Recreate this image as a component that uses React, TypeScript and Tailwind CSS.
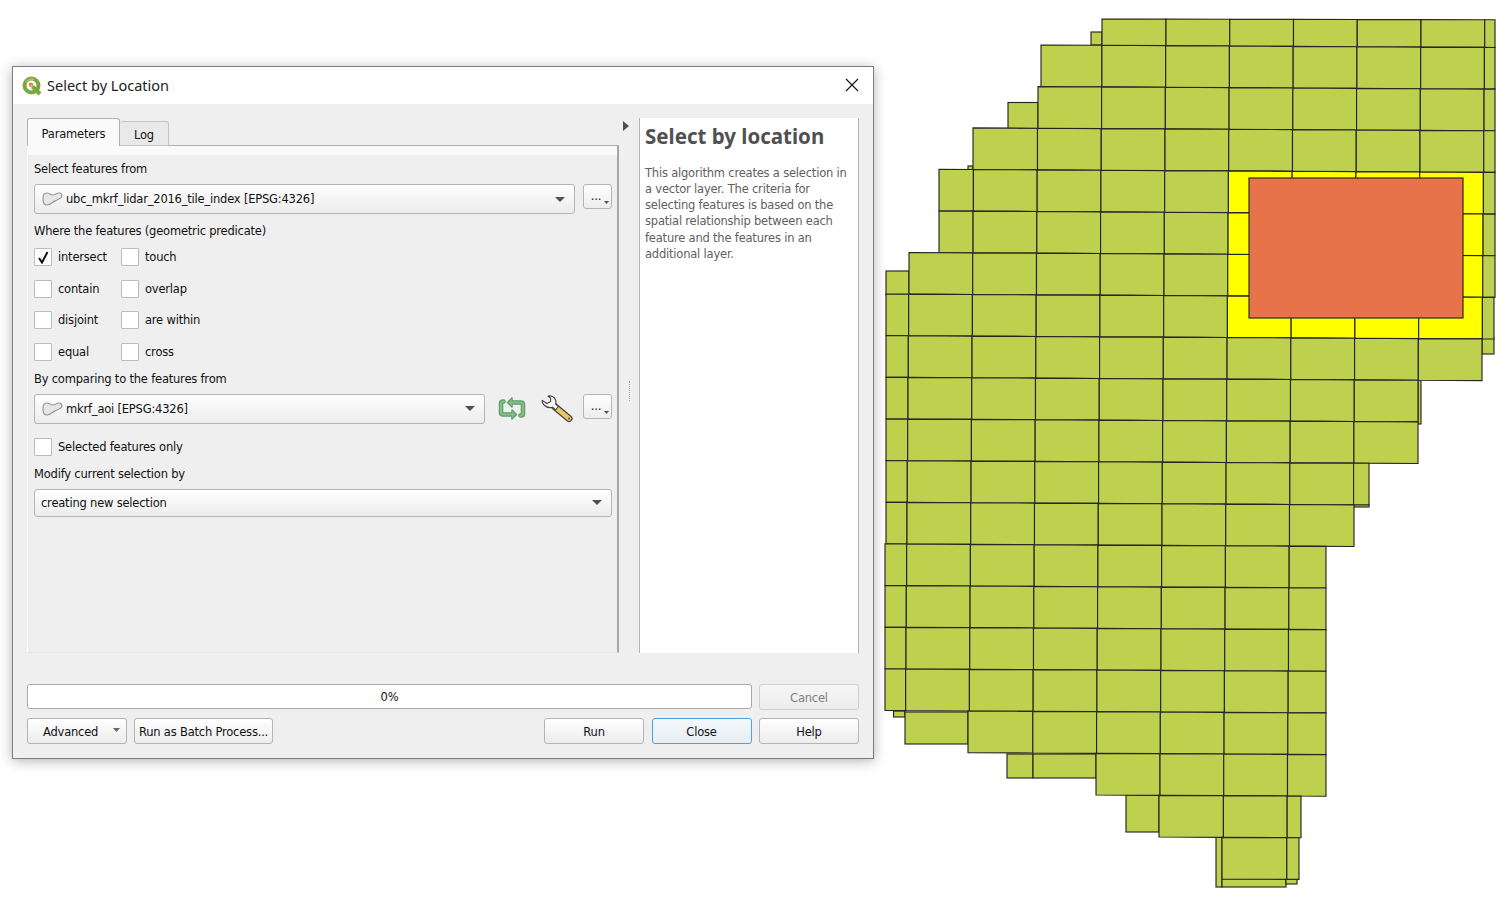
import React from "react";

const GREEN = "#bed14f";
const YELLOW = "#ffff00";
const LINE = "#262626";

// tile grid is a little skewed, so lines are computed
const colX = (k: number, y: number) => 1102.2 + 63.75 * k - 0.008 * (y - 30);
const rowY = (j: number, x: number) => 45.3 + 41.65 * j + 0.0055 * (x - 1102);

const tileRows = [
  { r: -1, l: 1102, e: 1495 },
  { r: 0, l: 1041, e: 1495 },
  { r: 1, l: 1038, e: 1495 },
  { r: 2, l: 973, e: 1495 },
  { r: 3, l: 939, e: 1495 },
  { r: 4, l: 939, e: 1495 },
  { r: 5, l: 909, e: 1495 },
  { r: 6, l: 886, e: 1494 },
  { r: 7, l: 886, e: 1482 },
  { r: 8, l: 886, e: 1418 },
  { r: 9, l: 886, e: 1418 },
  { r: 10, l: 886, e: 1369 },
  { r: 11, l: 886, e: 1354 },
  { r: 12, l: 885, e: 1326 },
  { r: 13, l: 885, e: 1326 },
  { r: 14, l: 885, e: 1326 },
  { r: 15, l: 885, e: 1326 },
  { r: 16, l: 968, e: 1326 },
  { r: 17, l: 1096, e: 1326 },
  { r: 18, l: 1159, e: 1301 },
  { r: 19, l: 1222, e: 1299 },
];

const extraTiles = [
  [1091, 32, 1102, 45],
  [1008, 102.5, 1038, 129],
  [968, 166, 973, 170],
  [886, 271, 909, 295],
  [1482, 338, 1494, 354],
  [1418, 380, 1421, 424],
  [1354, 504, 1369, 507],
  [893.5, 711, 905, 717],
  [905, 712, 968, 744],
  [1007, 754, 1033, 778],
  [1033, 754, 1096, 778],
  [1126, 795, 1159, 832],
  [1216, 837, 1222, 887],
  [1222, 879, 1286, 887],
  [1286, 879, 1297, 884],
];

function TileMap() {
  const cells: React.ReactNode[] = [];
  tileRows.forEach((row) => {
    const ym = rowY(row.r, 1200) + 20;
    const ks: number[] = [];
    for (let k = -4; k < 8; k++) {
      const x = colX(k, ym);
      if (x > row.l + 2 && x < row.e - 2) ks.push(k);
    }
    const edges = [null, ...ks, null];
    for (let i = 0; i < edges.length - 1; i++) {
      const a = edges[i];
      const b = edges[i + 1];
      const xa = a === null ? row.l : colX(a, ym);
      const xb = b === null ? row.e : colX(b, ym);
      const top = (x: number) => (row.r === -1 ? 19 + 0.002 * (x - 1102) : rowY(row.r, x));
      const bot = (x: number) => rowY(row.r + 1, x);
      const selected = row.r >= 3 && row.r <= 6 && a !== null && a >= 2 && b !== null && b <= 6;
      cells.push(
        <polygon
          key={`${row.r}-${i}`}
          points={`${xa},${top(xa)} ${xb},${top(xb)} ${xb},${bot(xb)} ${xa},${bot(xa)}`}
          fill={selected ? YELLOW : GREEN}
          stroke={LINE}
          strokeWidth="1.15"
        />
      );
    }
  });
  return (
    <svg width="629" height="898" viewBox="880 0 629 898" className="shrink-0 ml-[6px]">
      {extraTiles.map(([a, b, c, d], i) => (
        <rect key={i} x={a} y={b} width={c - a} height={d - b} fill={GREEN} stroke={LINE} strokeWidth="1.15" />
      ))}
      {cells}
      <rect x="1249" y="178" width="214" height="140" fill="#e8734a" stroke={LINE} strokeWidth="1.15" />
    </svg>
  );
}

function QgisLogo() {
  return (
    <svg width="20" height="20" viewBox="0 0 20 20" className="shrink-0">
      <circle cx="9.5" cy="9.5" r="7" fill="none" stroke="#79a83f" strokeWidth="4" />
      <path d="M10.5 10.5 L18 18" stroke="#79a83f" strokeWidth="4" />
      <path d="M4 7 A6 6 0 0 1 12 3.6" fill="none" stroke="#a9c95c" strokeWidth="1.5" />
      <circle cx="9" cy="8.8" r="2.2" fill="#ea7d45" />
      <circle cx="9.6" cy="9.6" r="0.9" fill="#f2d060" />
    </svg>
  );
}

function LayerIcon() {
  return (
    <svg width="21" height="14" viewBox="0 0 21 14" className="shrink-0">
      <path
        d="M4.5 1 C7 1 8.5 3 10.8 3 C13 3 14.6 1 17.2 1 C19.4 1 20.2 2.6 19.8 4.4 C19.4 6.4 16.6 7.4 13.5 8.6 C10.6 9.8 8.6 13 5 13 C1.8 13 1 10.6 1 7 C1 3.4 1.6 1 4.5 1 Z"
        fill="#e6e6e6"
        stroke="#979797"
        strokeWidth="1.2"
      />
    </svg>
  );
}

function Caret({ small }: { small?: boolean }) {
  return small ? (
    <svg width="5" height="3" viewBox="0 0 5 3" className="absolute right-[2px] bottom-[4px]">
      <path d="M0 0 H5 L2.5 3 Z" fill="#555" />
    </svg>
  ) : (
    <svg width="10" height="5" viewBox="0 0 10 5" className="shrink-0">
      <path d="M0 0 H10 L5 5 Z" fill="#505050" />
    </svg>
  );
}

function Combo({ width, height, text, layer }: { width: string; height: string; text: string; layer?: boolean }) {
  return (
    <div className={`${width} ${height} flex items-center pl-[6px] pr-[9px] rounded-[3px] border border-[#b4b4b4] bg-gradient-to-b from-white to-[#ececec] shrink-0`}>
      {layer && (
        <div className="ml-[1px] mr-[3px] flex">
          <LayerIcon />
        </div>
      )}
      <span className="flex-1 text-[#111] pt-[2px]">{text}</span>
      <Caret />
    </div>
  );
}

function MoreButton() {
  return (
    <div className="relative w-[29px] h-[25px] rounded-[3px] border border-[#b4b4b4] bg-gradient-to-b from-white to-[#ececec] flex items-center justify-center shrink-0">
      <span className="leading-none text-[#111] mt-[1px] -ml-[3px]">...</span>
      <Caret small />
    </div>
  );
}

function Check({ label, checked, width }: { label: string; checked?: boolean; width?: string }) {
  return (
    <div className={`flex items-center gap-[6px] ${width ?? ""}`}>
      <div className="w-[18px] h-[18px] bg-white border border-[#bcbcbc] rounded-[1px] flex items-center justify-center shrink-0">
        {checked && (
          <svg width="12" height="13" viewBox="0 0 12 13">
            <path d="M2 7 L5 11.5 L10.5 1" fill="none" stroke="#111" strokeWidth="2" />
          </svg>
        )}
      </div>
      <span className="text-[#111] pt-[2px]">{label}</span>
    </div>
  );
}

function Label({ children, height }: { children: React.ReactNode; height: string }) {
  return <div className={`${height} flex items-center text-[#111] pt-[2px]`}>{children}</div>;
}

function Btn({ children, width, active, disabled }: { children: React.ReactNode; width: string; active?: boolean; disabled?: boolean }) {
  const tone = active
    ? "border-[#4aa3e8] from-[#f4f8fb] to-[#e6eef4] text-[#111]"
    : disabled
      ? "border-[#cfcfcf] from-[#f6f6f6] to-[#ececec] text-[#808080]"
      : "border-[#b4b4b4] from-white to-[#ececec] text-[#111]";
  return (
    <div className={`${width} h-[26px] rounded-[3px] border bg-gradient-to-b ${tone} flex items-center justify-center shrink-0 pt-[3px]`}>
      {children}
    </div>
  );
}

function SyncIcon() {
  const left = "M5.5 4.5 H5 Q3 4.5 3 6.5 V15.5 Q3 17.5 5 17.5 H14";
  const right = "M22.5 18.5 H23 Q25 18.5 25 16.5 V7.5 Q25 5.5 23 5.5 H14";
  return (
    <svg width="28" height="24" viewBox="0 0 28 24" className="shrink-0">
      <g fill="none" strokeLinejoin="round" strokeLinecap="round">
        <path d={left} stroke="#5e9e68" strokeWidth="4.6" />
        <path d={right} stroke="#5e9e68" strokeWidth="4.6" />
        <path d="M14 13 L18.5 17.5 L14 22 Z" fill="#5e9e68" stroke="#5e9e68" strokeWidth="1.5" />
        <path d="M14 1 L9.5 5.5 L14 10 Z" fill="#5e9e68" stroke="#5e9e68" strokeWidth="1.5" />
        <path d={left} stroke="#86bd88" strokeWidth="2.2" />
        <path d={right} stroke="#86bd88" strokeWidth="2.2" />
        <path d="M14.5 14.5 L17 17.5 L14.5 20.5 Z" fill="#86bd88" stroke="#86bd88" strokeWidth="0.6" />
        <path d="M13.5 2.5 L11 5.5 L13.5 8.5 Z" fill="#86bd88" stroke="#86bd88" strokeWidth="0.6" />
      </g>
    </svg>
  );
}

function WrenchIcon() {
  return (
    <svg width="32" height="28" viewBox="0 0 32 28" className="shrink-0">
      <path d="M13 11 L28 23.5" stroke="#444" strokeWidth="7" strokeLinecap="round" />
      <path d="M13.5 11.5 L28 23.5" stroke="#e8c766" strokeWidth="4.6" strokeLinecap="round" />
      <path
        d="M7 1 C10 0.4 13.5 1.8 14.6 5 C15.2 6.8 15 8 14.6 9 L17.5 11.5 L14.5 15 L11.5 12.2 C9 13 5.5 12.4 3 10 C1.6 8.6 1 7 1.2 5.4 L6 8.5 L9.6 6.6 L9.6 3.2 Z"
        fill="#f4f4f4"
        stroke="#444"
        strokeWidth="1.1"
        strokeLinejoin="round"
      />
      <circle cx="28" cy="23.5" r="1" fill="#555" />
    </svg>
  );
}

const helpLines = [
  "This algorithm creates a selection in",
  "a vector layer. The criteria for",
  "selecting features is based on the",
  "spatial relationship between each",
  "feature and the features in an",
  "additional layer.",
];

const predicates = [
  ["intersect", "touch"],
  ["contain", "overlap"],
  ["disjoint", "are within"],
  ["equal", "cross"],
];

export default function App() {
  return (
    <div className="w-[1509px] h-[898px] bg-white overflow-hidden flex items-start font-['DejaVu_Sans',sans-serif] text-[11.5px] tracking-[-0.2px] leading-none">
      <div className="ml-[12px] mt-[66px] w-[862px] h-[693px] shrink-0 border border-[#7d7d7d] bg-[#efefef] shadow-[0_2px_12px_rgba(0,0,0,0.3)] flex flex-col">
        <div className="h-[37px] bg-white flex items-center pl-[9px] pr-[14px] shrink-0">
          <QgisLogo />
          <span className="ml-[5px] flex-1 font-['Noto_Sans',sans-serif] tracking-normal text-[14.5px] text-[#222]">Select by Location</span>
          <svg width="14" height="14" viewBox="0 0 14 14" className="-mt-[2px]">
            <path d="M1 1 L13 13 M13 1 L1 13" stroke="#111" strokeWidth="1.1" />
          </svg>
        </div>

        <div className="flex-1 flex flex-col pl-[14px] pr-[14px] pt-[14px]">
          <div className="flex h-[535px] shrink-0">
            <div className="w-[592px] flex flex-col shrink-0">
              <div className="flex items-end h-[28px] shrink-0">
                <div className="w-[93px] h-[28px] bg-[#fafafa] border border-b-0 border-[#b0b0b0] rounded-t-[3px] flex items-center justify-center text-[#111] pt-[4px]">
                  Parameters
                </div>
                <div className="w-[49px] h-[25px] bg-[#e9e9e9] border border-l-0 border-[#c4c4c4] rounded-t-[3px] flex items-center justify-center text-[#111] pt-[4px]">
                  Log
                </div>
                <div className="flex-1 h-[1px] bg-[#b0b0b0]"></div>
              </div>

              <div className="flex-1 border-l border-l-white border-r-2 border-r-[#a6a6a6] border-b border-b-[#e6e6e6] flex flex-col">
                <div className="h-[9px] bg-[#fafafa] shrink-0"></div>
                <div className="flex-1 pl-[6px] pr-[5px] flex flex-col">
                  <Label height="h-[28px]">Select features from</Label>
                  <div className="flex gap-[8px] mt-[1px]">
                    <Combo width="w-[541px]" height="h-[30px]" text="ubc_mkrf_lidar_2016_tile_index [EPSG:4326]" layer />
                    <MoreButton />
                  </div>
                  <Label height="h-[33px]">Where the features (geometric predicate)</Label>
                  <div className="flex flex-col gap-[13.5px] mt-[1px]">
                    {predicates.map(([a, b]) => (
                      <div key={a} className="flex">
                        <Check label={a} checked={a === "intersect"} width="w-[87px]" />
                        <Check label={b} />
                      </div>
                    ))}
                  </div>
                  <Label height="h-[36px]">By comparing to the features from</Label>
                  <div className="flex items-start mt-[-3px]">
                    <Combo width="w-[451px]" height="h-[30px]" text="mkrf_aoi [EPSG:4326]" layer />
                    <div className="w-[98px] h-[30px] flex items-center pl-[13px] shrink-0">
                      <SyncIcon />
                      <div className="ml-[15px] flex">
                        <WrenchIcon />
                      </div>
                    </div>
                    <MoreButton />
                  </div>
                  <div className="mt-[14px]">
                    <Check label="Selected features only" />
                  </div>
                  <Label height="h-[36px]">Modify current selection by</Label>
                  <div className="-mt-[3px]">
                    <Combo width="w-[578px]" height="h-[28px]" text="creating new selection" />
                  </div>
                </div>
              </div>
            </div>

            <div className="w-[20px] shrink-0 flex flex-col items-center">
              <svg width="6" height="10" viewBox="0 0 6 10" className="mt-[3px] -ml-[7px]">
                <path d="M0 0 L6 5 L0 10 Z" fill="#505050" />
              </svg>
              <div className="mt-[250px] h-[20px] w-[1px] border-l border-dotted border-[#a8a8a8]"></div>
            </div>

            <div className="w-[220px] bg-white border-x border-[#b4b4b4] pl-[5px] pt-[6px] shrink-0">
              <h1 className="h-[24px] flex items-center font-['Noto_Sans',sans-serif] text-[20.5px] font-bold text-[#505050] tracking-normal">Select by location</h1>
              <div className="mt-[17.5px] text-[#606060]">
                {helpLines.map((line) => (
                  <div key={line} className="h-[16.2px] flex items-center whitespace-nowrap">
                    {line}
                  </div>
                ))}
              </div>
            </div>
          </div>

          <div className="flex gap-[7px] mt-[31px] shrink-0">
            <div className="relative w-[725px] h-[25px] bg-white border border-[#a8a8a8] rounded-[3px] flex items-center justify-center text-[#111] pt-[2px]">
              0%
            </div>
            <Btn width="w-[100px]" disabled>
              Cancel
            </Btn>
          </div>

          <div className="flex mt-[8px] shrink-0">
            <div className="w-[100px] h-[26px] rounded-[3px] border border-[#b4b4b4] bg-gradient-to-b from-white to-[#ececec] flex items-center pl-[15px] pr-[6px] justify-between text-[#111] shrink-0 pt-[3px]">
              <span>Advanced</span>
              <svg width="7" height="4" viewBox="0 0 7 4" className="-mt-[6px]">
                <path d="M0 0 H7 L3.5 4 Z" fill="#666" />
              </svg>
            </div>
            <div className="ml-[7px]">
              <Btn width="w-[139px]">Run as Batch Process...</Btn>
            </div>
            <div className="ml-auto flex gap-[7.5px]">
              <Btn width="w-[100px]">Run</Btn>
              <Btn width="w-[100px]" active>
                Close
              </Btn>
              <Btn width="w-[100px]">Help</Btn>
            </div>
          </div>
        </div>
      </div>
      <TileMap />
    </div>
  );
}
